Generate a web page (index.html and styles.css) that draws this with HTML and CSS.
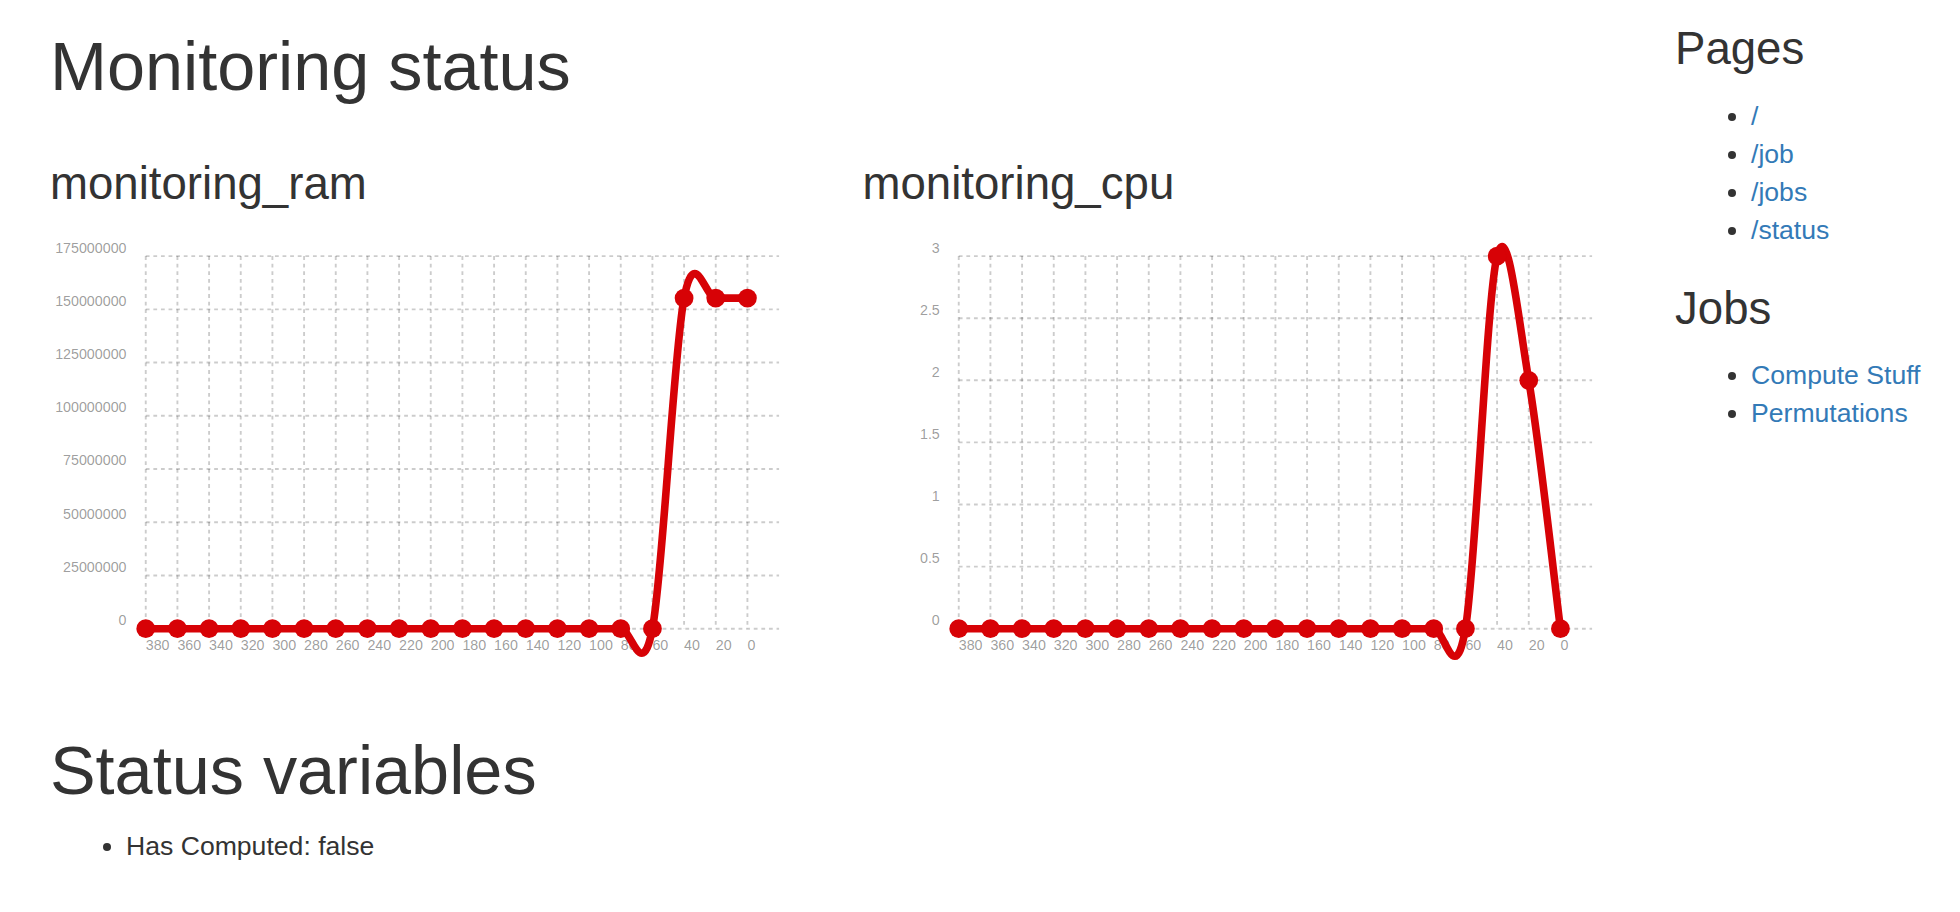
FILE: index.html
```html
<!DOCTYPE html>
<html lang="en">
<head>
<meta charset="utf-8">
<title>Monitoring status</title>
<link rel="stylesheet" href="styles.css">
</head>
<body>
<div class="layout">
  <main class="main">
    <h1 class="title">Monitoring status</h1>
    <div class="charts">
      <section class="chart-col">
        <h3 class="chart-title">monitoring_ram</h3>
        <svg class="chart" width="756" height="468" viewBox="0 0 756 468">
          <path class="grid" d="M95.75 28.1V400.7M127.42 28.1V400.7M159.08 28.1V400.7M190.75 28.1V400.7M222.42 28.1V400.7M254.08 28.1V400.7M285.75 28.1V400.7M317.42 28.1V400.7M349.08 28.1V400.7M380.75 28.1V400.7M412.42 28.1V400.7M444.08 28.1V400.7M475.75 28.1V400.7M507.42 28.1V400.7M539.08 28.1V400.7M570.75 28.1V400.7M602.42 28.1V400.7M634.08 28.1V400.7M665.75 28.1V400.7M697.42 28.1V400.7"/>
          <path class="grid" d="M95.75 28.1H729.08M95.75 81.33H729.08M95.75 134.56H729.08M95.75 187.79H729.08M95.75 241.01H729.08M95.75 294.24H729.08M95.75 347.47H729.08M95.75 400.7H729.08"/>
          <g class="ylabels">
            <text x="76.5" y="24.5">175000000</text>
            <text x="76.5" y="77.73">150000000</text>
            <text x="76.5" y="130.96">125000000</text>
            <text x="76.5" y="184.19">100000000</text>
            <text x="76.5" y="237.41">75000000</text>
            <text x="76.5" y="290.64">50000000</text>
            <text x="76.5" y="343.87">25000000</text>
            <text x="76.5" y="397.1">0</text>
          </g>
          <g class="xlabels">
            <text x="95.75" y="422">380</text>
            <text x="127.42" y="422">360</text>
            <text x="159.08" y="422">340</text>
            <text x="190.75" y="422">320</text>
            <text x="222.42" y="422">300</text>
            <text x="254.08" y="422">280</text>
            <text x="285.75" y="422">260</text>
            <text x="317.42" y="422">240</text>
            <text x="349.08" y="422">220</text>
            <text x="380.75" y="422">200</text>
            <text x="412.42" y="422">180</text>
            <text x="444.08" y="422">160</text>
            <text x="475.75" y="422">140</text>
            <text x="507.42" y="422">120</text>
            <text x="539.08" y="422">100</text>
            <text x="570.75" y="422">80</text>
            <text x="602.42" y="422">60</text>
            <text x="634.08" y="422">40</text>
            <text x="665.75" y="422">20</text>
            <text x="697.42" y="422">0</text>
          </g>
          <path class="series" d="M95.75 400.7L570.75 400.7C581.31 400.7 591.86 455.8 602.42 400.7C612.97 345.6 623.53 125.2 634.08 70.1C644.64 15 655.19 70.1 665.75 70.1C676.31 70.1 692.14 70.1 697.42 70.1"/>
          <g class="points">
            <circle cx="95.75" cy="400.7" r="9.4"/>
            <circle cx="127.42" cy="400.7" r="9.4"/>
            <circle cx="159.08" cy="400.7" r="9.4"/>
            <circle cx="190.75" cy="400.7" r="9.4"/>
            <circle cx="222.42" cy="400.7" r="9.4"/>
            <circle cx="254.08" cy="400.7" r="9.4"/>
            <circle cx="285.75" cy="400.7" r="9.4"/>
            <circle cx="317.42" cy="400.7" r="9.4"/>
            <circle cx="349.08" cy="400.7" r="9.4"/>
            <circle cx="380.75" cy="400.7" r="9.4"/>
            <circle cx="412.42" cy="400.7" r="9.4"/>
            <circle cx="444.08" cy="400.7" r="9.4"/>
            <circle cx="475.75" cy="400.7" r="9.4"/>
            <circle cx="507.42" cy="400.7" r="9.4"/>
            <circle cx="539.08" cy="400.7" r="9.4"/>
            <circle cx="570.75" cy="400.7" r="9.4"/>
            <circle cx="602.42" cy="400.7" r="9.4"/>
            <circle cx="634.08" cy="70.1" r="9.4"/>
            <circle cx="665.75" cy="70.1" r="9.4"/>
            <circle cx="697.42" cy="70.1" r="9.4"/>
          </g>
        </svg>
      </section>
      <section class="chart-col">
        <h3 class="chart-title">monitoring_cpu</h3>
        <svg class="chart" width="756" height="468" viewBox="0 0 756 468">
          <path class="grid" d="M95.75 28.1V400.7M127.42 28.1V400.7M159.08 28.1V400.7M190.75 28.1V400.7M222.42 28.1V400.7M254.08 28.1V400.7M285.75 28.1V400.7M317.42 28.1V400.7M349.08 28.1V400.7M380.75 28.1V400.7M412.42 28.1V400.7M444.08 28.1V400.7M475.75 28.1V400.7M507.42 28.1V400.7M539.08 28.1V400.7M570.75 28.1V400.7M602.42 28.1V400.7M634.08 28.1V400.7M665.75 28.1V400.7M697.42 28.1V400.7"/>
          <path class="grid" d="M95.75 28.1H729.08M95.75 90.2H729.08M95.75 152.3H729.08M95.75 214.4H729.08M95.75 276.5H729.08M95.75 338.6H729.08M95.75 400.7H729.08"/>
          <g class="ylabels">
            <text x="76.8" y="24.5">3</text>
            <text x="76.8" y="86.6">2.5</text>
            <text x="76.8" y="148.7">2</text>
            <text x="76.8" y="210.8">1.5</text>
            <text x="76.8" y="272.9">1</text>
            <text x="76.8" y="335">0.5</text>
            <text x="76.8" y="397.1">0</text>
          </g>
          <g class="xlabels">
            <text x="95.75" y="422">380</text>
            <text x="127.42" y="422">360</text>
            <text x="159.08" y="422">340</text>
            <text x="190.75" y="422">320</text>
            <text x="222.42" y="422">300</text>
            <text x="254.08" y="422">280</text>
            <text x="285.75" y="422">260</text>
            <text x="317.42" y="422">240</text>
            <text x="349.08" y="422">220</text>
            <text x="380.75" y="422">200</text>
            <text x="412.42" y="422">180</text>
            <text x="444.08" y="422">160</text>
            <text x="475.75" y="422">140</text>
            <text x="507.42" y="422">120</text>
            <text x="539.08" y="422">100</text>
            <text x="570.75" y="422">80</text>
            <text x="602.42" y="422">60</text>
            <text x="634.08" y="422">40</text>
            <text x="665.75" y="422">20</text>
            <text x="697.42" y="422">0</text>
          </g>
          <path class="series" d="M95.75 400.7L570.75 400.7C581.31 400.7 591.86 462.8 602.42 400.7C612.97 338.6 623.53 69.5 634.08 28.1C644.64 -13.3 655.19 90.2 665.75 152.3C676.31 214.4 692.14 359.3 697.42 400.7"/>
          <g class="points">
            <circle cx="95.75" cy="400.7" r="9.4"/>
            <circle cx="127.42" cy="400.7" r="9.4"/>
            <circle cx="159.08" cy="400.7" r="9.4"/>
            <circle cx="190.75" cy="400.7" r="9.4"/>
            <circle cx="222.42" cy="400.7" r="9.4"/>
            <circle cx="254.08" cy="400.7" r="9.4"/>
            <circle cx="285.75" cy="400.7" r="9.4"/>
            <circle cx="317.42" cy="400.7" r="9.4"/>
            <circle cx="349.08" cy="400.7" r="9.4"/>
            <circle cx="380.75" cy="400.7" r="9.4"/>
            <circle cx="412.42" cy="400.7" r="9.4"/>
            <circle cx="444.08" cy="400.7" r="9.4"/>
            <circle cx="475.75" cy="400.7" r="9.4"/>
            <circle cx="507.42" cy="400.7" r="9.4"/>
            <circle cx="539.08" cy="400.7" r="9.4"/>
            <circle cx="570.75" cy="400.7" r="9.4"/>
            <circle cx="602.42" cy="400.7" r="9.4"/>
            <circle cx="634.08" cy="28.1" r="9.4"/>
            <circle cx="665.75" cy="152.3" r="9.4"/>
            <circle cx="697.42" cy="400.7" r="9.4"/>
          </g>
        </svg>
      </section>
    </div>
    <h1 class="title status-title">Status variables</h1>
    <ul class="status-list">
      <li>Has Computed: false</li>
    </ul>
  </main>
  <aside class="sidebar">
    <h3 class="side-title">Pages</h3>
    <ul class="side-list">
      <li><a href="#">/</a></li>
      <li><a href="#">/job</a></li>
      <li><a href="#">/jobs</a></li>
      <li><a href="#">/status</a></li>
    </ul>
    <h3 class="side-title side-title-next">Jobs</h3>
    <ul class="side-list">
      <li><a href="#">Compute Stuff</a></li>
      <li><a href="#">Permutations</a></li>
    </ul>
  </aside>
</div>
</body>
</html>
```
FILE: styles.css
```css
html, body {
  margin: 0;
  padding: 0;
  background: #fff;
}

body {
  font-family: "Liberation Sans", Arial, Helvetica, sans-serif;
  font-size: 26.6px;
  line-height: 38px;
  color: #333;
  overflow: hidden;
}

a {
  color: #337ab7;
  text-decoration: none;
}

.layout {
  display: flex;
  margin-left: 22px;
}

.main {
  width: 1625px;
  flex: none;
  padding: 0 28px;
  box-sizing: border-box;
}

.title {
  font-size: 68.4px;
  line-height: 1.1;
  font-weight: 400;
  margin: 28.7px 0 19px;
}

.charts {
  display: grid;
  grid-template-columns: 1fr 1fr;
  margin: 0 -28px;
}

.chart-col {
  padding: 0 28px;
  min-width: 0;
}

.chart-title {
  font-size: 45.6px;
  line-height: 1.1;
  font-weight: 400;
  margin: 36.2px 0 18.3px;
}

.chart {
  display: block;
  overflow: visible;
}

.chart .grid {
  fill: none;
  stroke: rgba(0, 0, 0, 0.2);
  stroke-width: 1.9px;
  stroke-dasharray: 3.8px;
}

.chart text {
  font-family: "Liberation Sans", Arial, Helvetica, sans-serif;
  font-size: 14.25px;
  fill: rgba(0, 0, 0, 0.4);
}

.chart .ylabels text {
  text-anchor: end;
}

.chart .series {
  fill: none;
  stroke: #d70206;
  stroke-width: 7.6px;
}

.chart .points circle {
  fill: #d70206;
}

.status-title {
  margin-top: 37.1px;
}

.status-list {
  margin: 0 0 19px;
  padding-left: 76px;
}

.sidebar {
  flex: 1;
  padding: 0 28px;
}

.side-title {
  font-size: 45.6px;
  line-height: 1.1;
  font-weight: 400;
  margin: 24.1px 0 22.5px;
}

.side-title-next {
  margin-top: 34.8px;
}

.side-list {
  margin: 0;
  padding-left: 76px;
}
```
